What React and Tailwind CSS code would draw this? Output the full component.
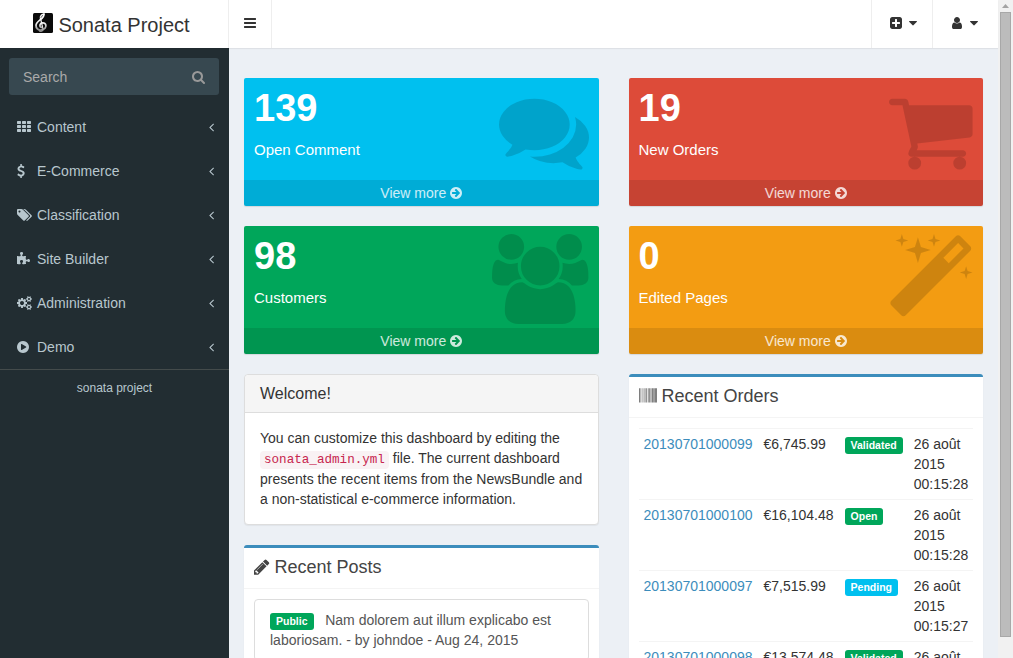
import React from "react";

const DISC =
  "M1536 640q0 -209 -103 -385.5t-279.5 -279.5t-385.5 -103t-385.5 103t-279.5 279.5t-103 385.5t103 385.5t279.5 279.5t385.5 103t385.5 -103t279.5 -279.5t103 -385.5z";

const SMALL_COG =
  "v-140q0 -16 -149 -31q-12 -27 -30 -52q51 -113 51 -138q0 -4 -4 -7q-122 -71 -124 -71q-8 0 -46 47t-52 68q-20 -2 -30 -2t-30 2q-14 -21 -52 -68t-46 -47q-2 0 -124 71q-4 3 -4 7q0 25 51 138q-18 25 -30 52q-149 15 -149 31v140q0 16 149 31q13 29 30 52q-51 113 -51 138q0 4 4 7q4 2 35 20t59 34t30 16q8 0 46 -46.5t52 -67.5q20 2 30 2t30 -2q51 71 92 112l6 2q4 0 124 -70q4 -3 4 -7q0 -25 -51 -138q17 -23 30 -52q149 -15 149 -31z";

// Glyphs are [advance width, outline], on a 1792-unit em with the y axis pointing up.
const GLYPHS = {
  bars: [1536, "M1536 192v-128q0 -26 -19 -45t-45 -19h-1408q-26 0 -45 19t-19 45v128q0 26 19 45t45 19h1408q26 0 45 -19t19 -45zM1536 704v-128q0 -26 -19 -45t-45 -19h-1408q-26 0 -45 19t-19 45v128q0 26 19 45t45 19h1408q26 0 45 -19t19 -45zM1536 1216v-128q0 -26 -19 -45t-45 -19h-1408q-26 0 -45 19t-19 45v128q0 26 19 45t45 19h1408q26 0 45 -19t19 -45z"],
  search: [1664, "M1152 704q0 185 -131.5 316.5t-316.5 131.5t-316.5 -131.5t-131.5 -316.5t131.5 -316.5t316.5 -131.5t316.5 131.5t131.5 316.5zM1664 -128q0 -52 -38 -90t-90 -38q-54 0 -90 38l-343 342q-179 -124 -399 -124q-143 0 -273.5 55.5t-225 150t-150 225t-55.5 273.5t55.5 273.5t150 225t225 150t273.5 55.5t273.5 -55.5t225 -150t150 -225t55.5 -273.5q0 -220 -124 -399l343 -343q37 -37 37 -90z"],
  comments: [1792, "M1408 768q0 -139 -94 -257t-256.5 -186.5t-353.5 -68.5q-86 0 -176 16q-124 -88 -278 -128q-36 -9 -86 -16h-3q-11 0 -20.5 8t-11.5 21q-1 3 -1 6.5t0.5 6.5t2 6l2.5 5t3.5 5.5t4 5t4.5 5t4 4.5q5 6 23 25t26 29.5t22.5 29t25 38.5t20.5 44q-124 72 -195 177t-71 224q0 139 94 257t256.5 186.5t353.5 68.5t353.5 -68.5t256.5 -186.5t94 -257zM1792 512q0 -120 -71 -224.5t-195 -176.5q10 -24 20.5 -44t25 -38.5t22.5 -29t26 -29.5t23 -25q1 -1 4 -4.5t4.5 -5t4 -5t3.5 -5.5l2.5 -5t2 -6t0.5 -6.5t-1 -6.5q-3 -14 -13 -22t-22 -7q-50 7 -86 16q-154 40 -278 128q-90 -16 -176 -16q-271 0 -472 132q58 -4 88 -4q161 0 309 45t264 129q125 92 192 212t67 254q0 77 -23 152q129 -71 204 -178t75 -230z"],
  cart: [1664, "M640 0q0 -52 -38 -90t-90 -38t-90 38t-38 90t38 90t90 38t90 -38t38 -90zM1536 0q0 -52 -38 -90t-90 -38t-90 38t-38 90t38 90t90 38t90 -38t38 -90zM1664 1088v-512q0 -24 -16.5 -42.5t-40.5 -21.5l-1044 -122q13 -60 13 -70q0 -16 -24 -64h920q26 0 45 -19t19 -45t-19 -45t-45 -19h-1024q-26 0 -45 19t-19 45q0 11 8 31.5t16 36t21.5 40t15.5 29.5l-177 823h-204q-26 0 -45 19t-19 45t19 45t45 19h256q16 0 28.5 -6.5t19.5 -15.5t13 -24.5t8 -26t5.5 -29.5t4.5 -26h1201q26 0 45 -19t19 -45z"],
  users: [1920, "M593 640q-162 -5 -265 -128h-134q-82 0 -138 40.5t-56 118.5q0 353 124 353q6 0 43.5 -21t97.5 -42.5t119 -21.5q67 0 133 23q-5 -37 -5 -66q0 -139 81 -256zM1664 3q0 -120 -73 -189.5t-194 -69.5h-874q-121 0 -194 69.5t-73 189.5q0 53 3.5 103.5t14 109t26.5 108.5t43 97.5t62 81t85.5 53.5t111.5 20q10 0 43 -21.5t73 -48t107 -48t135 -21.5t135 21.5t107 48t73 48t43 21.5q61 0 111.5 -20t85.5 -53.5t62 -81t43 -97.5t26.5 -108.5t14 -109t3.5 -103.5zM640 1280q0 -106 -75 -181t-181 -75t-181 75t-75 181t75 181t181 75t181 -75t75 -181zM1344 896q0 -159 -112.5 -271.5t-271.5 -112.5t-271.5 112.5t-112.5 271.5t112.5 271.5t271.5 112.5t271.5 -112.5t112.5 -271.5zM1920 671q0 -78 -56 -118.5t-138 -40.5h-134q-103 123 -265 128q81 117 81 256q0 29 -5 66q66 -23 133 -23q59 0 119 21.5t97.5 42.5t43.5 21q124 0 124 -353zM1792 1280q0 -106 -75 -181t-181 -75t-181 75t-75 181t75 181t181 75t181 -75t75 -181z"],
  magic: [1664, "M1190 955l293 293l-107 107l-293 -293zM1637 1248q0 -27 -18 -45l-1286 -1286q-18 -18 -45 -18t-45 18l-198 198q-18 18 -18 45t18 45l1286 1286q18 18 45 18t45 -18l198 -198q18 -18 18 -45zM286 1438l98 -30l-98 -30l-30 -98l-30 98l-98 30l98 30l30 98zM636 1276l196 -60l-196 -60l-60 -196l-60 196l-196 60l196 60l60 196zM1566 798l98 -30l-98 -30l-30 -98l-30 98l-98 30l98 30l30 98zM926 1438l98 -30l-98 -30l-30 -98l-30 98l-98 30l98 30l30 98z"],
  th: [1792, [0, 512, 1024].map((y) => [0, 640, 1280].map((x) => `M${x + 512} ${y + 288}v-192q0 -40 -28 -68t-68 -28h-320q-40 0 -68 28t-28 68v192q0 40 28 68t68 28h320q40 0 68 -28t28 -68z`).join("")).join("")],
  usd: [1024, "M978 351q0 -153 -99.5 -263.5t-258.5 -136.5v-175q0 -14 -9 -23t-23 -9h-135q-13 0 -22.5 9.5t-9.5 22.5v175q-66 9 -127.5 31t-101.5 44.5t-74 48t-46.5 37.5t-17.5 18q-17 21 -2 41l103 135q7 10 23 12q15 2 24 -9l2 -2q113 -99 243 -125q37 -8 74 -8q81 0 142.5 43t61.5 122q0 28 -15 53t-33.5 42t-58.5 37.5t-66 32t-80 32.5q-39 16 -61.5 25t-61.5 26.5t-62.5 31t-56.5 35.5t-53.5 42.5t-43.5 49t-35.5 58t-21 66.5t-8.5 78q0 138 98 242t255 134v180q0 13 9.5 22.5t22.5 9.5h135q14 0 23 -9t9 -23v-176q57 -6 110.5 -23t87 -33.5t63.5 -37.5t39 -29t15 -14q17 -18 5 -38l-81 -146q-8 -15 -23 -16q-14 -3 -27 7q-3 3 -14.5 12t-39 26.5t-58.5 32t-74.5 26t-85.5 11.5q-95 0 -155 -43t-60 -111q0 -26 8.5 -48t29.5 -41.5t39.5 -33t56 -31t60.5 -27t70 -27.5q53 -20 81 -31.5t76 -35t75.5 -42.5t62 -50t53 -63.5t31.5 -76.5t13 -94z"],
  tags: [1920, "M448 1088q0 53 -37.5 90.5t-90.5 37.5t-90.5 -37.5t-37.5 -90.5t37.5 -90.5t90.5 -37.5t90.5 37.5t37.5 90.5zM1515 512q0 -53 -37 -90l-491 -492q-39 -37 -91 -37q-53 0 -90 37l-715 716q-38 37 -64.5 101t-26.5 117v416q0 52 38 90t90 38h416q53 0 117 -26.5t102 -64.5l715 -714q37 -39 37 -91zM1899 512q0 -53 -37 -90l-491 -492q-39 -37 -91 -37q-36 0 -59 14t-53 45l470 470q37 37 37 90q0 52 -37 91l-715 714q-38 38 -102 64.5t-117 26.5h224q53 0 117 -26.5t102 -64.5l715 -714q37 -39 37 -91z"],
  puzzle: [1664, "M1664 438q0 -81 -44.5 -135t-123.5 -54q-41 0 -77.5 17.5t-59 38t-56.5 38t-71 17.5q-110 0 -110 -124q0 -39 16 -115t15 -115v-5q-22 0 -33 -1q-34 -3 -97.5 -11.5t-115.5 -13.5t-98 -5q-61 0 -103 26.5t-42 83.5q0 37 17.5 71t38 56.5t38 59t17.5 77.5q0 79 -54 123.5t-135 44.5q-84 0 -143 -45.5t-59 -127.5q0 -43 15 -83t33.5 -64.5t33.5 -53t15 -50.5q0 -45 -46 -89q-37 -35 -117 -35q-95 0 -245 24q-9 2 -27.5 4t-27.5 4l-13 2q-1 0 -3 1q-2 0 -2 1v1024q2 -1 17.5 -3.5t34 -5t21.5 -3.5q150 -24 245 -24q80 0 117 35q46 44 46 89q0 22 -15 50.5t-33.5 53t-33.5 64.5t-15 83q0 82 59 127.5t144 45.5q80 0 134 -44.5t54 -123.5q0 -41 -17.5 -77.5t-38 -59t-38 -56.5t-17.5 -71q0 -57 42 -83.5t103 -26.5q64 0 180 15t163 17v-2q-1 -2 -3.5 -17.5t-5 -34t-3.5 -21.5q-24 -150 -24 -245q0 -80 35 -117q44 -46 89 -46q22 0 50.5 15t53 33.5t64.5 33.5t83 15q82 0 127.5 -59t45.5 -143z"],
  cogs: [1920, "M896 640q0 106 -75 181t-181 75t-181 -75t-75 -181t75 -181t181 -75t181 75t75 181zM1664 128q0 52 -38 90t-90 38t-90 -38t-38 -90q0 -53 37.5 -90.5t90.5 -37.5t90.5 37.5t37.5 90.5zM1664 1152q0 52 -38 90t-90 38t-90 -38t-38 -90q0 -53 37.5 -90.5t90.5 -37.5t90.5 37.5t37.5 90.5zM1280 731v-185q0 -10 -7 -19.5t-16 -10.5l-155 -24q-11 -35 -32 -76q34 -48 90 -115q7 -11 7 -20q0 -12 -7 -19q-23 -30 -82.5 -89.5t-78.5 -59.5q-11 0 -21 7l-115 90q-37 -19 -77 -31q-11 -108 -23 -155q-7 -24 -30 -24h-186q-11 0 -20 7.5t-10 17.5l-23 153q-34 10 -75 31l-118 -89q-7 -7 -20 -7q-11 0 -21 8q-144 133 -144 160q0 9 7 19q10 14 41 53t47 61q-23 44 -35 82l-152 24q-10 1 -17 9.5t-7 19.5v185q0 10 7 19.5t16 10.5l155 24q11 35 32 76q-34 48 -90 115q-7 11 -7 20q0 12 7 20q22 30 82 89t79 59q11 0 21 -7l115 -90q34 18 77 32q11 108 23 154q7 24 30 24h186q11 0 20 -7.5t10 -17.5l23 -153q34 -10 75 -31l118 89q8 7 20 7q11 0 21 -8q144 -133 144 -160q0 -8 -7 -19q-12 -16 -42 -54t-45 -60q23 -48 34 -82l152 -23q10 -2 17 -10.5t7 -19.5zM1920 198" + SMALL_COG + "M1920 1222" + SMALL_COG],
  play: [1536, "M1184 640q0 37 -32 55l-544 320q-31 19 -64 1q-32 -19 -32 -56v-640q0 -37 32 -56q16 -8 32 -8q17 0 32 9l544 320q32 18 32 55z" + DISC],
  arrow: [1536, "M1285 640q0 27 -18 45l-91 91l-362 362q-18 18 -45 18t-45 -18l-91 -91q-18 -18 -18 -45t18 -45l189 -189h-502q-26 0 -45 -19t-19 -45v-128q0 -26 19 -45t45 -19h502l-189 -189q-19 -19 -19 -45t19 -45l91 -91q18 -18 45 -18t45 18l362 362l91 91q18 18 18 45z" + DISC],
  angleLeft: [640, "M627 992q0 -13 -10 -23l-393 -393l393 -393q10 -10 10 -23t-10 -23l-50 -50q-10 -10 -23 -10t-23 10l-466 466q-10 10 -10 23t10 23l466 466q10 10 23 10t23 -10l50 -50q10 -10 10 -23z"],
  plus: [1536, "M1280 576v128q0 26 -19 45t-45 19h-320v320q0 26 -19 45t-45 19h-128q-26 0 -45 -19t-19 -45v-320h-320q-26 0 -45 -19t-19 -45v-128q0 -26 19 -45t45 -19h320v-320q0 -26 19 -45t45 -19h128q26 0 45 19t19 45v320h320q26 0 45 19t19 45zM1536 1120v-960q0 -119 -84.5 -203.5t-203.5 -84.5h-960q-119 0 -203.5 84.5t-84.5 203.5v960q0 119 84.5 203.5t203.5 84.5h960q119 0 203.5 -84.5t84.5 -203.5z"],
  user: [1280, "M1280 137q0 -109 -62.5 -187t-150.5 -78h-854q-88 0 -150.5 78t-62.5 187q0 85 8.5 160.5t31.5 152t58.5 131t94 89t134.5 34.5q131 -128 313 -128t313 128q76 0 134.5 -34.5t94 -89t58.5 -131t31.5 -152t8.5 -160.5zM1024 1024q0 -159 -112.5 -271.5t-271.5 -112.5t-271.5 112.5t-112.5 271.5t112.5 271.5t271.5 112.5t271.5 -112.5t112.5 -271.5z"],
  caret: [1024, "M1024 832q0 -26 -19 -45l-448 -448q-19 -19 -45 -19t-45 19l-448 448q-19 19 -19 45t19 45t45 19h896q26 0 45 -19t19 -45z"],
  pencil: [1536, "M363 0l91 91l-235 235l-91 -91v-107h128v-128h107zM886 928q0 22 -22 22q-10 0 -17 -7l-542 -542q-7 -7 -7 -17q0 -22 22 -22q10 0 17 7l542 542q7 7 7 17zM832 1120l416 -416l-832 -832h-416v416zM1515 1024q0 -53 -37 -90l-166 -166l-416 416l166 165q36 38 90 38q53 0 91 -38l235 -234q37 -39 37 -91z"],
  barcode: [1792, "M63 0h-63v1408h63zM126 1h-32v1407h32zM220 1h-31v1407h31zM377 1h-31v1407h31zM534 1h-62v1407h62zM660 1h-31v1407h31zM723 1h-31v1407h31zM786 1h-31v1407h31zM943 1h-63v1407h63zM1100 1h-63v1407h63zM1226 1h-63v1407h63zM1352 1h-63v1407h63zM1446 1h-63v1407h63zM1635 1h-94v1407h94zM1698 1h-32v1407h32zM1792 0h-63v1408h63z"],
};

function Icon({ name, className = "h-3.5 align-[-2px]" }) {
  const [width, path] = GLYPHS[name];
  return (
    <svg viewBox={`0 0 ${width} 1792`} fill="currentColor" fillRule="evenodd" aria-hidden="true" className={`inline-block w-auto max-w-none shrink-0 overflow-visible ${className}`}>
      <path transform="translate(0 1536) scale(1 -1)" d={path} />
    </svg>
  );
}

function Logo() {
  return (
    <svg viewBox="0 0 20 20" aria-hidden="true" className="size-5 shrink-0">
      <defs>
        <linearGradient id="clef" x1="0" y1="0" x2="0" y2="1">
          <stop offset="0" stopColor="#ffffff" />
          <stop offset="0.6" stopColor="#eeeeee" />
          <stop offset="1" stopColor="#8a8a8a" />
        </linearGradient>
      </defs>
      <rect width="20" height="20" rx="1.5" fill="#0a0a0a" />
      <g fill="none" stroke="url(#clef)" strokeLinecap="round">
        <path strokeWidth="1.5" d="M11.2 1C9 1.2 7.400 3 7.300 5.400" />
        <path strokeWidth="1.8" d="M10.800 1.300C11.600 5.800 3.200 7.600 3 12.200C2.800 15.600 5.400 17.300 8.400 17C11.800 16.600 13.800 14 12.600 11.400C11.300 9 7.600 9.500 7 12C6.700 13.600 7.600 14.500 8.800 14.300" />
        <path strokeWidth="1.2" d="M7.600 5.600L10 16.200C10.200 18.400 7.400 19 6.400 17.800" />
      </g>
    </svg>
  );
}

const MENU = [
  ["th", "Content"],
  ["usd", "E-Commerce"],
  ["tags", "Classification"],
  ["puzzle", "Site Builder"],
  ["cogs", "Administration"],
  ["play", "Demo"],
];

const ORDERS = [
  ["20130701000099", "€6,745.99", "Validated", "26 août 2015 00:15:28"],
  ["20130701000100", "€16,104.48", "Open", "26 août 2015 00:15:28"],
  ["20130701000097", "€7,515.99", "Pending", "26 août 2015 00:15:27"],
  ["20130701000098", "€13,574.48", "Validated", "26 août 2015 00:15:27"],
];

function StatCard({ value, label, icon, color }) {
  return (
    <section className={`relative rounded-xs text-white shadow-[0_1px_1px_rgba(0,0,0,0.1)] ${color}`}>
      <div className="px-[10px] pt-2 pb-[10px]">
        <h3 className="text-[38px] leading-[44px] font-bold">{value}</h3>
        <p className="my-[9px] text-[15px] leading-[22px]">{label}</p>
      </div>
      <div className="absolute top-2 right-[10px] text-black/15">
        <Icon name={icon} className="block h-[90px]" />
      </div>
      <a href="#" className="block rounded-b-xs bg-black/10 py-[3px] text-center leading-5 text-white/80">
        View more <Icon name="arrow" />
      </a>
    </section>
  );
}

function Label({ children }) {
  const color = children === "Pending" ? "bg-[#00c0ef]" : "bg-[#00a65a]";
  return <span className={`rounded-[3px] px-[6px] pt-[2px] pb-[3px] text-[75%] leading-none font-bold text-white ${color}`}>{children}</span>;
}

function Box({ icon, title, children }) {
  return (
    <section className="rounded-[3px] border-t-[3px] border-[#3c8dbc] bg-white shadow-[0_1px_1px_rgba(0,0,0,0.1)]">
      <h3 className="border-b border-[#f4f4f4] px-[10px] pt-[9px] pb-[11px] text-lg leading-5 text-[#444]">
        <Icon name={icon} className="h-[18px] align-[-3px]" /> {title}
      </h3>
      <div className="p-[10px]">{children}</div>
    </section>
  );
}

function NavMenu({ icon, label }) {
  return (
    <button type="button" aria-label={label} className="flex h-12 items-center gap-1 border-l border-[#eee] px-[15px] pb-[2px]">
      <span className="flex w-[18px] justify-center">
        <Icon name={icon} className="h-3.5" />
      </span>
      <Icon name="caret" className="h-3.5" />
    </button>
  );
}

export default function App() {
  return (
    <div className="flex h-screen overflow-hidden bg-[#ecf0f5] font-['Liberation_Sans',Arial,sans-serif] text-sm leading-5 text-[#333]">
      <div className="flex min-w-0 flex-1 flex-col">
        <header className="z-10 flex h-12 shrink-0 bg-white shadow-[0_1px_1px_rgba(0,0,0,0.06)]">
          <a href="#" className="flex w-[229px] shrink-0 items-center justify-center gap-[5px] border-r border-[#eee] pt-[2px] pr-[5px] text-xl">
            <span className="pb-1"><Logo /></span>
            <span>Sonata Project</span>
          </a>
          <button type="button" aria-label="Toggle navigation" className="flex items-center border-r border-[#eee] px-[15px] pb-[2px]">
            <Icon name="bars" className="h-3.5" />
          </button>
          <nav aria-label="Account" className="ml-auto flex pr-[5px]">
            <NavMenu icon="plus" label="Add" />
            <NavMenu icon="user" label="User" />
          </nav>
        </header>

        <div className="flex min-h-0 flex-1">
          <aside className="w-[229px] shrink-0 bg-[#222d32] text-[#b8c7ce]">
            <form className="m-[10px] ml-[9px] flex h-[37px] items-center rounded-[3px] bg-[#374850]">
              <input type="text" aria-label="Search" placeholder="Search" className="h-full min-w-0 flex-1 bg-transparent pl-3.5 text-[#b8c7ce] outline-none placeholder:text-[#aaa]" />
              <button type="submit" aria-label="Submit search" className="flex h-full items-center px-3.5 text-[#999]">
                <Icon name="search" className="h-3.5" />
              </button>
            </form>
            <nav aria-label="Main">
              <ul>
                {MENU.map(([icon, text]) => (
                  <li key={text}>
                    <a href="#" className="flex h-11 items-center pr-[15px] pl-[17px]">
                      <span className="flex w-5">
                        <Icon name={icon} className="h-3.5" />
                      </span>
                      <span className="flex-1">{text}</span>
                      <Icon name="angleLeft" className="h-3.5" />
                    </a>
                  </li>
                ))}
              </ul>
            </nav>
            <p className="border-t border-[#444b4b] pt-2 text-center text-xs leading-5">
              <a href="#">sonata project</a>
            </p>
          </aside>

          <main className="grid min-w-0 flex-1 grid-cols-2 items-start gap-x-[30px] overflow-hidden px-[15px] pt-[30px]">
            <div className="flex min-w-0 flex-col gap-5">
              <StatCard value="139" label="Open Comment" icon="comments" color="bg-[#00c0ef]" />
              <StatCard value="98" label="Customers" icon="users" color="bg-[#00a65a]" />
              <section className="rounded-sm border border-[#ddd] bg-white shadow-[0_1px_1px_rgba(0,0,0,0.05)]">
                <h3 className="rounded-t-sm border-b border-[#ddd] bg-[#f5f5f5] px-[15px] pt-[9px] pb-2 text-base leading-5">Welcome!</h3>
                <p className="p-[15px]">
                  You can customize this dashboard by editing the{" "}
                  <code className="rounded-sm bg-[#f9f2f4] px-1 py-[2px] font-['Liberation_Mono',monospace] text-[90%] leading-[18px] text-[#c7254e]">sonata_admin.yml</code>{" "}
                  file. The current dashboard presents the recent items from the NewsBundle and a non-statistical e-commerce information.
                </p>
              </section>
              <Box icon="pencil" title="Recent Posts">
                <a href="#" className="block rounded-sm border border-[#ddd] px-[15px] py-[10px] text-[#555]">
                  <Label>Public</Label> &nbsp; Nam dolorem aut illum explicabo est laboriosam. - by johndoe - Aug 24, 2015
                </a>
              </Box>
            </div>

            <div className="flex min-w-0 flex-col gap-5">
              <StatCard value="19" label="New Orders" icon="cart" color="bg-[#dd4b39]" />
              <StatCard value="0" label="Edited Pages" icon="magic" color="bg-[#f39c12]" />
              <Box icon="barcode" title="Recent Orders">
                <table aria-label="Recent Orders" className="w-full border-collapse">
                  <tbody>
                    {ORDERS.map(([id, price, status, date]) => (
                      <tr key={id} className="border-t border-[#f4f4f4] align-top">
                        <td className="p-[5px]">
                          <a href="#" className="text-[#3c8dbc]">{id}</a>
                        </td>
                        <td className="py-[5px] pr-[5px] pl-[6px]">{price}</td>
                        <td className="py-[5px] pr-[6px] pl-[6px]">
                          <Label>{status}</Label>
                        </td>
                        <td className="p-[5px]">{date}</td>
                      </tr>
                    ))}
                  </tbody>
                </table>
              </Box>
            </div>
          </main>
        </div>
      </div>

      <div aria-hidden="true" className="flex w-[15px] shrink-0 flex-col items-center bg-[#f1f1f1]">
        <svg viewBox="0 0 15 12" className="h-3 w-[15px] shrink-0">
          <path d="M4 8L7.500 4L11 8Z" fill="#a3a3a3" />
        </svg>
        <div className="h-[95%] w-[11px] border border-[#a8a8a8] bg-[#bcbcbc]" />
      </div>
    </div>
  );
}
